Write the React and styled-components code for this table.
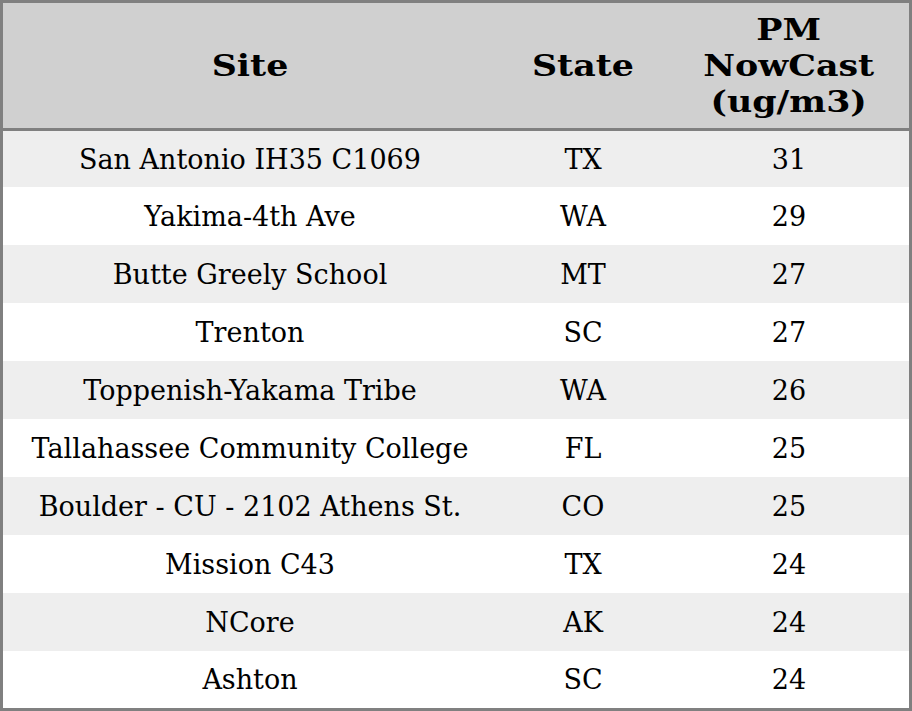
import React from 'react'
import styled, { createGlobalStyle } from 'styled-components'

const GlobalStyle = createGlobalStyle`
  html, body {
    margin: 0;
    padding: 0;
    background: #ffffff;
  }
`

const Table = styled.table`
  width: 912px;
  border-collapse: separate;
  border-spacing: 0;
  border: 3px solid #808080;
  font-family: "DejaVu Serif", "Liberation Serif", serif;
  color: #000000;
  table-layout: fixed;
`

const HeadCell = styled.th`
  height: 125px;
  padding: 0 4px;
  background-color: #d0d0d0;
  border-bottom: 3px solid #808080;
  font-size: 30px;
  line-height: 36px;
  font-weight: bold;
  text-align: center;
  vertical-align: middle;
`

/* header glyphs are drawn wide in the source */
const HeadLabel = styled.span`
  display: inline-block;
  transform: scaleX(1.16);
`

const Row = styled.tr`
  height: 58px;
  background-color: ${props => (props.$striped ? '#eeeeee' : '#ffffff')};

  &:first-child {
    height: 56px;
  }

  &:last-child {
    height: 57px;
  }
`

const Cell = styled.td`
  padding: 0;
  font-size: 27px;
  text-align: center;
  vertical-align: middle;
`

const rows = [
  ['San Antonio IH35 C1069', 'TX', 31],
  ['Yakima-4th Ave', 'WA', 29],
  ['Butte Greely School', 'MT', 27],
  ['Trenton', 'SC', 27],
  ['Toppenish-Yakama Tribe', 'WA', 26],
  ['Tallahassee Community College', 'FL', 25],
  ['Boulder - CU - 2102 Athens St.', 'CO', 25],
  ['Mission C43', 'TX', 24],
  ['NCore', 'AK', 24],
  ['Ashton', 'SC', 24],
]

const App = () => (
  <>
    <GlobalStyle />
    <Table>
      <colgroup>
        <col style={{ width: 494 }} />
        <col style={{ width: 172 }} />
        <col style={{ width: 240 }} />
      </colgroup>
      <thead>
        <tr>
          <HeadCell><HeadLabel>Site</HeadLabel></HeadCell>
          <HeadCell><HeadLabel>State</HeadLabel></HeadCell>
          <HeadCell><HeadLabel>PM<br />NowCast<br />(ug/m3)</HeadLabel></HeadCell>
        </tr>
      </thead>
      <tbody>
        {rows.map(([site, state, value], i) => (
          <Row key={site} $striped={i % 2 === 0}>
            <Cell>{site}</Cell>
            <Cell>{state}</Cell>
            <Cell>{value}</Cell>
          </Row>
        ))}
      </tbody>
    </Table>
  </>
)

export default App
